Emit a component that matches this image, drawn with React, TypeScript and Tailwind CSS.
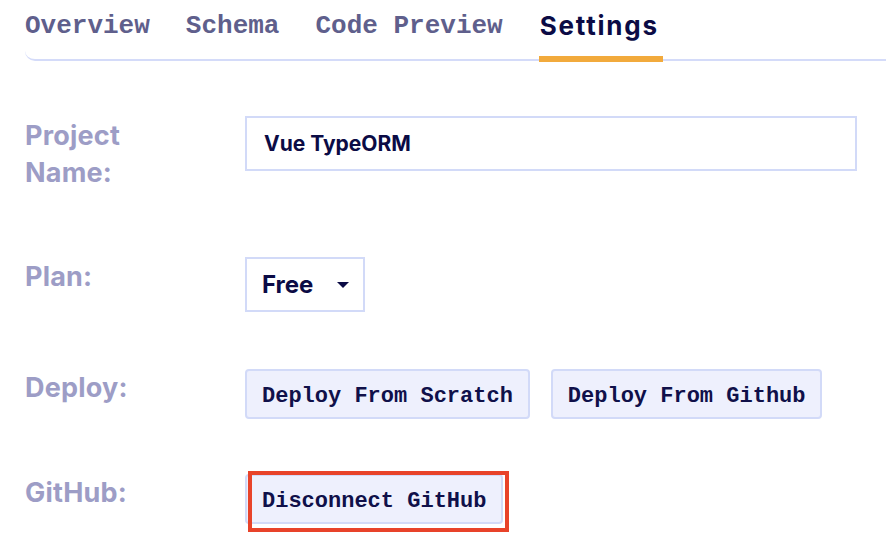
import React from 'react';

const tabs = ['Overview', 'Schema', 'Code Preview'];

const mono = "font-['Liberation_Mono',monospace]";
const sans = "font-['Inter','Noto_Sans',sans-serif]";

const labelCls = `${sans} w-[220px] text-[27px] font-bold leading-[37px] tracking-[0.2px] text-[#9d9dc6]`;
const btnCls = `${mono} h-[50px] rounded-[4px] border-2 border-[#d2daf8] bg-[#eef0fd] px-[15px] pt-[4px] text-[22px] font-bold text-[#10104a]`;

const App: React.FC = () => {
  return (
    <div className="h-[546px] w-[886px] overflow-hidden bg-white">
      {/* Tabs */}
      <nav className="ml-[25px] flex h-[61px] items-start gap-[36px] rounded-bl-[10px] border-b-2 border-[#d4dbf9] pt-[8px]">
        {tabs.map(t => (
          <span key={t} className={`${mono} text-[26px] font-bold leading-[36px] text-[#5f5f8c]`}>{t}</span>
        ))}
        <span className={`${sans} relative w-[124px] pl-[1px] text-[26px] font-bold leading-[36px] tracking-[1.8px] text-[#0b0b45]`}>
          Settings
          <span className="absolute left-0 top-[48px] h-[6px] w-[124px] bg-[#f2aa3c]" />
        </span>
      </nav>

      {/* Form */}
      <div className="ml-[25px] pt-[55px]">
        <div className="flex items-start">
          <div className={`${labelCls} pt-[1px]`}>
            Project<br />Name:
          </div>
          <div className={`${sans} flex h-[55px] w-[612px] items-center border-2 border-[#d2daf8] pl-[17px] text-[21px] font-bold text-[#0b0b45]`}>
            Vue TypeORM
          </div>
        </div>

        <div className="mt-[66px] flex items-start">
          <div className={`${labelCls} pt-[1px]`}>Plan:</div>
          <div className={`${sans} flex h-[55px] w-[120px] items-center border-2 border-[#d2daf8] pl-[15px] text-[24px] font-bold text-[#0b0b45]`}>
            Free
            <svg className="ml-[24px]" width="12" height="6" viewBox="0 0 12 6">
              <path d="M0 0h12L6 6z" fill="#0b0b45" />
            </svg>
          </div>
        </div>

        <div className="mt-[57px] flex items-start">
          <div className={labelCls}>Deploy:</div>
          <div className="flex gap-[21px]">
            <button className={btnCls}>Deploy From Scratch</button>
            <button className={btnCls}>Deploy From Github</button>
          </div>
        </div>

        <div className="mt-[55px] flex items-start">
          <div className={labelCls}>GitHub:</div>
          <div className="relative">
            <button className={btnCls}>Disconnect GitHub</button>
            <span className="pointer-events-none absolute left-[3px] top-[-3px] h-[61px] w-[261px] border-4 border-[#e8432a]" />
          </div>
        </div>
      </div>
    </div>
  );
};

export default App;
